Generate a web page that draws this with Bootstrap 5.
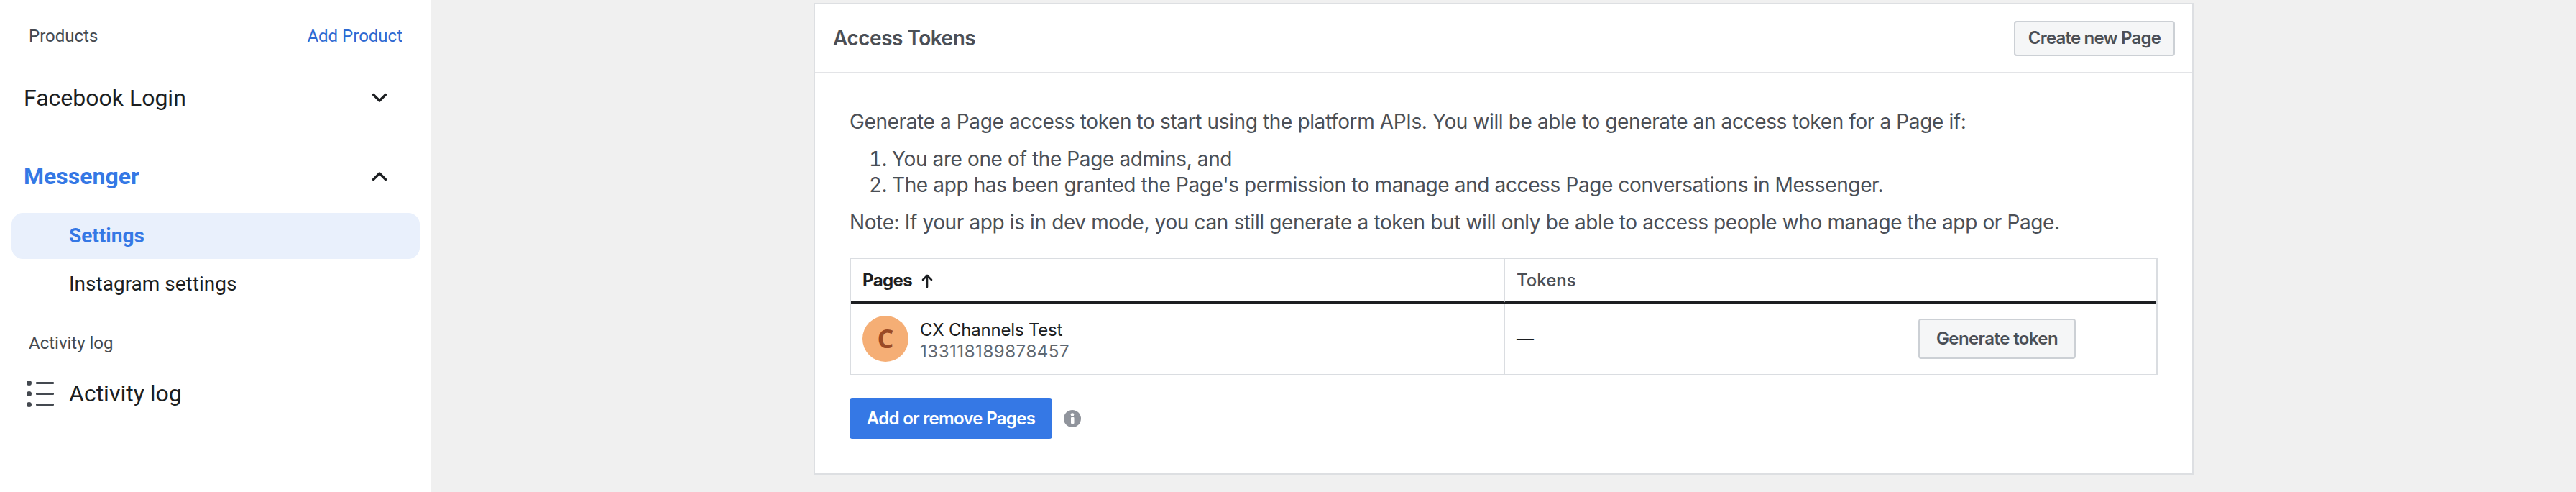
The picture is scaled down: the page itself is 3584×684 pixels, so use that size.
<!DOCTYPE html>
<html lang="en">
<head>
<meta charset="utf-8">
<title>Access Tokens</title>
<link href="https://cdn.jsdelivr.net/npm/bootstrap@5.3.0/dist/css/bootstrap.min.css" rel="stylesheet">
<style>
html,body{height:100%;}
body{background:#f0f0f0;font-family:"Inter","Liberation Sans",sans-serif;color:#4b4f56;}
.shell{height:684px;overflow:hidden;}
.side{width:600px;flex:none;background:#fff;font-family:"Roboto","Liberation Sans",sans-serif;}
.side-head{height:100px;padding:0 40px 0 40px;font-size:24px;color:#444950;}
.side-head a{color:#2d69d2;text-decoration:none;}
.side-item{padding:0 62px 0 33px;height:72px;font-size:32px;color:#1c1e21;}
.side-item.open{color:#3578e5;font-weight:700;}
.side-gap{height:37px;}
.side-gap2{height:15px;}
.side-sub{margin:0 16px;height:64px;padding-left:80px;font-size:28px;color:#1c1e21;border-radius:16px;}
.side-sub.on{background:#e9f0fc;color:#3578e5;font-weight:700;}
.side-sub.next{height:70px;}
.side-label{padding-left:40px;height:52px;margin-top:21px;font-size:24px;color:#444950;}
.side-log{height:88px;padding-left:37px;font-size:32px;color:#1c1e21;}
.side-log svg{margin-right:21px;}
.main-col{min-width:0;padding-top:4px;}
.token-card{width:1920px;height:656px;border:2px solid #dddfe2;background:#fff;border-radius:0;}
.token-head{height:96px;padding:0 24px 0 25px;border-bottom:2px solid #e3e4e7;background:#fff;font-size:28px;font-weight:600;color:#4b4f56;letter-spacing:-.5px;}
.btn-soft{background:#f5f6f7;border:2px solid #ccd0d5;border-radius:4px;font-size:24px;font-weight:600;color:#4b4f56;padding:0;height:49px;width:224px;line-height:1;letter-spacing:-.8px;}
.token-body{padding:49px 48px 0;font-size:28px;line-height:36px;color:#4b4f56;letter-spacing:-.38px;}
.token-body p{margin:0;}
.token-list{margin:16px 0 16px;padding-left:59px;}
.page-table{width:1820px;height:164px;margin:31px 0 0;border:2px solid #dadde1;border-collapse:separate;border-spacing:0;letter-spacing:0;}
.page-table th{height:62px;padding:0 16px;border-bottom:3px solid #1c1e21;font-size:24px;font-weight:700;color:#1c1e21;vertical-align:middle;background:#fff;}
.page-table th:first-child{width:908px;letter-spacing:-.6px;}
.page-table th+th{font-weight:500;color:#4b4f56;border-left:2px solid #dadde1;letter-spacing:0;}
.page-table td{padding:0 16px;vertical-align:middle;background:#fff;font-size:24px;color:#1c1e21;}
.page-table td+td{border-left:2px solid #dadde1;}
.avatar{width:64px;height:64px;background:#f5ae75;color:#9a4a25;font-size:36px;font-weight:700;font-family:"Open Sans","Liberation Sans",sans-serif;}
.page-text{padding-top:5px;}
.page-name{font-size:24px;line-height:30px;color:#1c1e21;letter-spacing:-.2px;}
.page-id{font-size:24px;line-height:30px;color:#606770;letter-spacing:.55px;}
.btn-gen{width:219px;height:56px;margin-right:96px;letter-spacing:-.6px;}
.btn-blue{background:#3578e5;border:0;border-radius:4px;color:#fff;width:282px;height:56px;font-size:24px;font-weight:600;padding:0;letter-spacing:-.7px;}
.add-row{margin-top:32px;}
</style>
</head>
<body>
<div class="shell d-flex">
  <aside class="side">
    <div class="side-head d-flex align-items-center justify-content-between"><span>Products</span><a href="#">Add Product</a></div>
    <div class="side-item d-flex align-items-center justify-content-between"><span>Facebook Login</span>
      <svg width="20" height="14" viewBox="0 0 20 14" fill="none" stroke="#1c1e21" stroke-width="3.4" stroke-linecap="round" stroke-linejoin="round"><path d="M1.5 2.5 10 11 18.500 2.500"/></svg></div>
    <div class="side-gap"></div>
    <div class="side-item open d-flex align-items-center justify-content-between"><span>Messenger</span>
      <svg width="20" height="14" viewBox="0 0 20 14" fill="none" stroke="#1c1e21" stroke-width="3.4" stroke-linecap="round" stroke-linejoin="round"><path d="M1.5 11.500 10 3 18.500 11.500"/></svg></div>
    <div class="side-gap2"></div>
    <div class="side-sub on d-flex align-items-center">Settings</div>
    <div class="side-sub next d-flex align-items-center">Instagram settings</div>
    <div class="side-label d-flex align-items-center">Activity log</div>
    <div class="side-log d-flex align-items-center">
      <svg width="38" height="37" viewBox="0 0 38 37" fill="#444950"><rect x="0" y="0" width="7" height="7" rx="3.500"/><rect x="0" y="15" width="7" height="7" rx="3.500"/><rect x="0" y="30" width="7" height="7" rx="3.500"/><rect x="13" y="2" width="25" height="3" rx="1"/><rect x="13" y="17" width="25" height="3" rx="1"/><rect x="13" y="32" width="25" height="3" rx="1"/></svg>
      <span>Activity log</span></div>
  </aside>
  <main class="main-col flex-grow-1">
    <div class="token-card card mx-auto">
      <div class="token-head d-flex align-items-center justify-content-between"><span>Access Tokens</span><button class="btn btn-soft" type="button">Create new Page</button></div>
      <div class="token-body">
        <p>Generate a Page access token to start using the platform APIs. You will be able to generate an access token for a Page if:</p>
        <ol class="token-list"><li>You are one of the Page admins, and</li><li>The app has been granted the Page's permission to manage and access Page conversations in Messenger.</li></ol>
        <p>Note: If your app is in dev mode, you can still generate a token but will only be able to access people who manage the app or Page.</p>
        <table class="page-table">
          <thead><tr><th>Pages <svg class="ms-2" width="16" height="20" viewBox="0 0 16 20" fill="none" stroke="#1c1e21" stroke-width="2.600" stroke-linecap="round" stroke-linejoin="round"><path d="M8 18V2M2 8l6-6 6 6"/></svg></th><th>Tokens</th></tr></thead>
          <tbody><tr>
            <td><div class="d-flex align-items-center gap-3"><div class="avatar rounded-circle d-flex align-items-center justify-content-center">C</div><div class="page-text"><div class="page-name">CX Channels Test</div><div class="page-id">133118189878457</div></div></div></td>
            <td><div class="d-flex align-items-center justify-content-between"><span>—</span><button class="btn btn-soft btn-gen" type="button">Generate token</button></div></td>
          </tr></tbody>
        </table>
        <div class="add-row d-flex align-items-center gap-3">
          <button class="btn btn-blue" type="button">Add or remove Pages</button>
          <svg width="24" height="24" viewBox="0 0 24 24"><circle cx="12" cy="12" r="12" fill="#90949c"/><rect x="10" y="10" width="4.500" height="9" rx="1" fill="#fff"/><circle cx="12" cy="6.500" r="2.300" fill="#fff"/></svg>
        </div>
      </div>
    </div>
  </main>
</div>
<script src="https://cdn.jsdelivr.net/npm/bootstrap@5.3.0/dist/js/bootstrap.bundle.min.js"></script>
</body>
</html>
